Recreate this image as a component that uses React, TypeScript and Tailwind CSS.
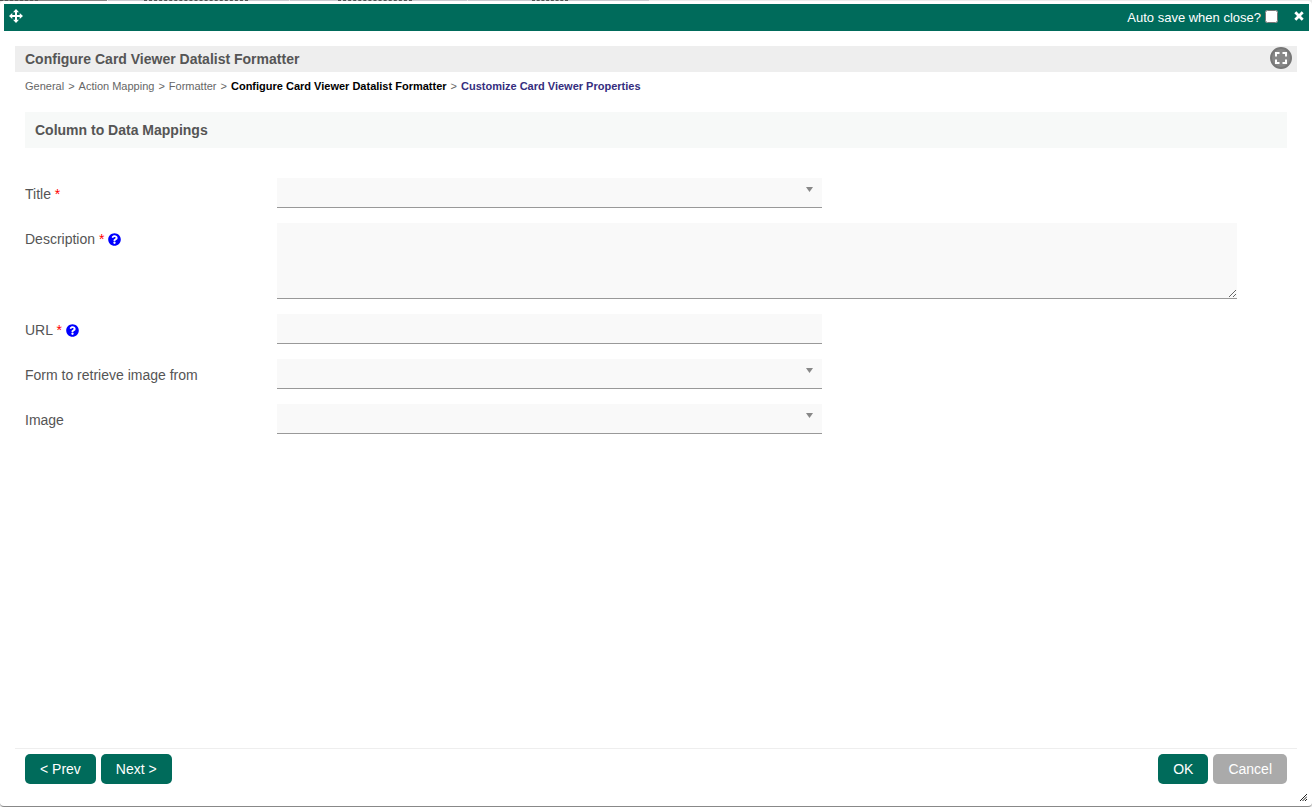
import { useState } from "react";
import { FaQuestionCircle } from "react-icons/fa";

const backdropTabs = [
  { id: "general", className: "w-[107px] bg-[#8a8686]", dashes: "w-[38px]" },
  { id: "description", className: "w-[181px] bg-[#cbcad0]", dashes: "ml-[36px] w-[104px]" },
  { id: "preview", className: "w-[177px] bg-[#cbcad0]", dashes: "ml-[48px] w-[74px]" },
  { id: "type", className: "w-[181px] bg-[#cbcad0]", dashes: "ml-[64px] w-[36px]" },
];

const crumbs = ["General", "Action Mapping", "Formatter"];

type Field = {
  id: string;
  label: string;
  type: "select" | "text" | "textarea";
  required?: boolean;
  help?: boolean;
};

const fields: Field[] = [
  { id: "title", label: "Title", type: "select", required: true },
  { id: "description", label: "Description", type: "textarea", required: true, help: true },
  { id: "url", label: "URL", type: "text", required: true, help: true },
  { id: "imageForm", label: "Form to retrieve image from", type: "select" },
  { id: "image", label: "Image", type: "select" },
];

const inputClass =
  "block w-full border-b border-[#999] bg-[#f9f9f9] px-3 text-sm text-[#555] outline-none focus:border-[#006b5b]";

function MoveIcon() {
  return (
    <svg className="h-[14px] w-[14px] cursor-move" viewBox="0 0 14 14" fill="currentColor">
      <path d="M7 0l3 3.300H8V6h2.700V4L14 7l-3.300 3V8H8v2.700h2L7 14l-3-3.300h2V8H3.300v2L0 7l3.300-3v2H6V3.300H4z" />
    </svg>
  );
}

function CloseIcon() {
  return (
    <svg className="h-[10px] w-[10px]" viewBox="0 0 10 10" stroke="currentColor" strokeWidth="2.800">
      <path d="M1.300 1.300l7.400 7.400M8.700 1.300L1.300 8.700" />
    </svg>
  );
}

function FullscreenIcon() {
  return (
    <svg className="h-[12px] w-[12px]" viewBox="0 0 12 12" fill="none" stroke="currentColor" strokeWidth="2">
      <path d="M1 4.500V1h3.500M7.500 1H11v3.500M11 7.500V11H7.500M4.500 11H1V7.500" />
    </svg>
  );
}

function FieldInput({ field }: { field: Field }) {
  if (field.type === "textarea") {
    return <textarea id={field.id} className={`${inputClass} h-[76px] resize`} />;
  }

  if (field.type === "text") {
    return (
      <div className="w-[56.8%]">
        <input id={field.id} type="text" className={`${inputClass} h-[30px]`} />
      </div>
    );
  }

  return (
    <div className="relative w-[56.8%]">
      <select id={field.id} className={`${inputClass} h-[30px] appearance-none`}>
        <option value=""></option>
      </select>
      <svg className="pointer-events-none absolute right-[9px] top-[9px] h-[5px] w-[7px]" viewBox="0 0 7 5">
        <path d="M0 0h7L3.500 5z" fill="#888" />
      </svg>
    </div>
  );
}

function FieldRow({ field }: { field: Field }) {
  return (
    <div className="flex items-start">
      <div className="flex w-[20%] shrink-0 items-center gap-1 pt-[6px] leading-5">
        <label htmlFor={field.id}>
          {field.label}
          {field.required && <span className="text-[#f00]"> *</span>}
        </label>
        {field.help && (
          <button type="button" aria-label={`Help for ${field.label}`} className="text-[#00f]">
            <FaQuestionCircle size={13} />
          </button>
        )}
      </div>
      <div className="w-[76%]">
        <FieldInput field={field} />
      </div>
    </div>
  );
}

export default function App() {
  const [autoSave, setAutoSave] = useState(false);

  return (
    <div className="flex h-screen flex-col bg-[#ececec] font-['Liberation_Sans',Arial,sans-serif] text-sm text-[#555]">
      <div className="flex h-px shrink-0 gap-px overflow-hidden" aria-hidden="true">
        {backdropTabs.map((tab) => (
          <div key={tab.id} className={tab.className}>
            <div className={`border-t border-dashed border-[#555] ${tab.dashes}`} />
          </div>
        ))}
      </div>

      <div className="flex min-h-0 flex-1 flex-col rounded-[4px] border-b border-[#888] bg-white">
        <header className="ml-[4px] mr-[3px] mt-[3px] flex h-[27px] shrink-0 items-center justify-between bg-[#006b5b] pl-[5px] pr-[5px] text-white">
          <div className="mb-[3px]">
            <MoveIcon />
          </div>
          <div className="flex items-center">
            <label htmlFor="autoSave" className="pt-[2px] text-[13px]">
              Auto save when close?
            </label>
            <input
              id="autoSave"
              type="checkbox"
              checked={autoSave}
              onChange={(e) => setAutoSave(e.target.checked)}
              className="mb-[2px] ml-1 h-[13px] w-[13px]"
            />
            <button type="button" aria-label="Close" className="mb-[4px] ml-4">
              <CloseIcon />
            </button>
          </div>
        </header>

        <main className="flex min-h-0 flex-1 flex-col px-[15px] pt-[15px]">
          <div className="flex h-[26px] shrink-0 items-center justify-between bg-[#eee] pl-[10px] pr-[5px]">
            <h1 className="font-bold">Configure Card Viewer Datalist Formatter</h1>
            <button
              type="button"
              aria-label="Toggle full screen"
              className="mb-[2px] flex h-[22px] w-[22px] items-center justify-center rounded-full border-2 border-[#777] bg-[#888] text-white"
            >
              <FullscreenIcon />
            </button>
          </div>

          <nav className="flex shrink-0 gap-1 px-[10px] pt-[6px] text-[11px] leading-4 text-[#666]">
            {crumbs.map((crumb) => (
              <span key={crumb} className="flex gap-1">
                <a href="#">{crumb}</a>
                <span>&gt;</span>
              </span>
            ))}
            <a href="#" className="font-bold text-black">Configure Card Viewer Datalist Formatter</a>
            <span>&gt;</span>
            <a href="#" className="font-bold text-[#352e7e]">Customize Card Viewer Properties</a>
          </nav>

          <form className="flex min-h-0 flex-1 flex-col" onSubmit={(e) => e.preventDefault()}>
            <div className="flex-1 overflow-auto px-[10px] pt-[18px]">
              <h2 className="flex h-9 items-center bg-[#f7f9f8] px-[10px] font-bold">Column to Data Mappings</h2>
              <div className="mt-[30px] flex flex-col gap-[15px]">
                {fields.map((field) => (
                  <FieldRow key={field.id} field={field} />
                ))}
              </div>
            </div>

            <div className="flex shrink-0 justify-between border-t border-[#eee] px-[10px] pt-[5px] text-white">
              <div className="flex gap-[5px]">
                <button type="button" className="h-[30px] rounded-[5px] bg-[#006b5b] px-[15px]">&lt; Prev</button>
                <button type="button" className="h-[30px] rounded-[5px] bg-[#006b5b] px-[15px]">Next &gt;</button>
              </div>
              <div className="flex gap-[5px]">
                <button type="submit" className="h-[30px] rounded-[5px] bg-[#006b5b] px-[15px]">OK</button>
                <button type="button" className="h-[30px] rounded-[5px] bg-[#aaa] px-[15px]">Cancel</button>
              </div>
            </div>
          </form>
        </main>

        <div className="flex h-[22px] shrink-0 items-end justify-end pb-[5px] pr-[5px]">
          <svg className="h-[7px] w-[7px] cursor-se-resize" viewBox="0 0 7 7" stroke="#222" strokeWidth="1">
            <path d="M0 7L7 0M2.500 7L7 2.500M5 7L7 5" />
          </svg>
        </div>
      </div>
    </div>
  );
}
